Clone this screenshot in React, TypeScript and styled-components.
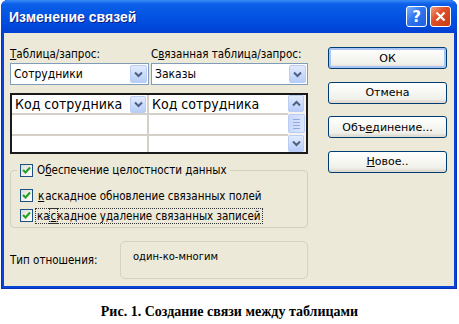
import styled, { createGlobalStyle } from 'styled-components';

const GlobalStyle = createGlobalStyle`
    body {
        margin: 0;
        background: #fff;
        font-family: "DejaVu Sans Condensed", "Liberation Sans", sans-serif;
    }
`;

const Page = styled.div`
    width: 459px;
    height: 324px;
    display: flex;
    flex-direction: column;
    align-items: flex-start;
`;

const Window = styled.div`
    width: 456px;
    height: 289px;
    margin-left: 1px;
    box-sizing: border-box;
    display: flex;
    flex-direction: column;
    border-radius: 7px 7px 0 0;
    background: #0a44d6;
    padding: 0 3px 3px 3px;
    box-shadow: inset 0 0 0 1px #0831b8;
`;

const TitleBar = styled.div`
    height: 33px;
    flex-shrink: 0;
    margin: 0 -3px;
    border-radius: 7px 7px 0 0;
    background: linear-gradient(#3b8cf7 0%, #0b5fe8 12%, #0455e3 45%, #0048dc 80%, #0340d2 100%);
    display: flex;
    align-items: center;
    padding: 0 6px 0 8px;
    gap: 3px;
`;

const Title = styled.div`
    flex: 1;
    color: #fff;
    font-family: "Liberation Sans", sans-serif;
    font-weight: bold;
    font-size: 14px;
    text-shadow: 1px 1px 0 #0a1e8a;
`;

const CaptionButton = styled.div<{ $close?: boolean }>`
    width: 21px;
    height: 21px;
    box-sizing: border-box;
    border: 1px solid #fff;
    border-radius: 3px;
    background: ${p => (p.$close
        ? 'linear-gradient(135deg, #f0a080 0%, #e0502a 40%, #c63a14 100%)'
        : 'linear-gradient(135deg, #7fb0ff 0%, #2f74f0 45%, #1d5fe0 100%)')};
    display: flex;
    align-items: center;
    justify-content: center;
    color: #fff;
    font-family: "DejaVu Sans", sans-serif;
    font-weight: bold;
    font-size: 15px;
`;

const Client = styled.div`
    flex: 1;
    background: #ece9d8;
    display: grid;
    grid-template-columns: 298px 119px;
    column-gap: 20px;
    padding: 0 0 0 6px;
    font-size: 11.5px;
    color: #000;
`;

const LeftColumn = styled.div`
    display: flex;
    flex-direction: column;
    padding-top: 11px;
`;

const LabelRow = styled.div`
    display: grid;
    grid-template-columns: 141px 1fr;
    height: 19px;
    align-items: center;
    white-space: nowrap;
`;

const ComboRow = styled.div`
    display: grid;
    grid-template-columns: 139px 1fr;
    column-gap: 2px;
`;

const Combo = styled.div`
    height: 22px;
    box-sizing: border-box;
    border: 1px solid #7f9db9;
    background: #fff;
    display: flex;
    align-items: center;
    padding: 0 1px 0 3px;
    font-size: 12px;
`;

const ComboText = styled.span`
    flex: 1;
    white-space: nowrap;
`;

const ArrowButton = styled.div<{ $small?: boolean }>`
    width: ${p => (p.$small ? '16px' : '17px')};
    height: ${p => (p.$small ? '17px' : '18px')};
    flex-shrink: 0;
    box-sizing: border-box;
    border: 1px solid #b9cdf5;
    border-radius: 2px;
    background: linear-gradient(#e2ebfe, #b7cdf7);
    display: flex;
    align-items: center;
    justify-content: center;
`;

const Grid = styled.div`
    margin-top: 8px;
    height: 61px;
    box-sizing: border-box;
    border: 2px solid #1a1a1a;
    background: #fff;
    display: grid;
    grid-template-columns: 1fr 18px;
`;

const Cells = styled.div`
    display: grid;
    grid-template-columns: 137px 1fr;
    grid-template-rows: 20px 21px 1fr;
`;

const Cell = styled.div<{ $right?: boolean; $last?: boolean }>`
    border-right: ${p => (p.$right ? 'none' : '2px solid #d4d0c8')};
    border-bottom: ${p => (p.$last ? 'none' : '2px solid #d4d0c8')};
    display: flex;
    align-items: center;
    padding: 0 1px 0 3px;
    font-size: 14px;
    white-space: nowrap;
`;

const ScrollBar = styled.div`
    display: flex;
    flex-direction: column;
    justify-content: space-between;
    padding: 0 1px 0 0;
    background: #f4f3ee;
`;

const Thumb = styled.div`
    flex: 1;
    margin: 2px 0;
    border: 1px solid #b9cdf5;
    border-radius: 2px;
    background: linear-gradient(90deg, #c9d8fb, #dbe6fd);
    display: flex;
    flex-direction: column;
    align-items: center;
    justify-content: center;
    gap: 2px;
`;

const Grip = styled.div`
    width: 7px;
    height: 1px;
    background: #8fa9e6;
`;

const GroupBox = styled.div`
    margin-top: 16px;
    height: 58px;
    box-sizing: border-box;
    border: 1px solid #d0d0bf;
    border-radius: 4px;
    position: relative;
    display: flex;
    flex-direction: column;
    padding: 16px 0 0 9px;
    gap: 3px;
`;

const Legend = styled.div`
    position: absolute;
    top: -10px;
    left: 6px;
    padding: 0 3px;
    background: #ece9d8;
    display: flex;
    align-items: center;
    gap: 4px;
    height: 18px;
`;

const CheckRow = styled.div<{ $focused?: boolean }>`
    display: flex;
    align-items: center;
    gap: 3px;
    height: 17px;

    span {
        outline: ${p => (p.$focused ? '1px dotted #333' : 'none')};
        padding: 0 1px;
    }
`;

const CheckBox = styled.div`
    width: 13px;
    height: 13px;
    box-sizing: border-box;
    border: 1px solid #1c5180;
    background: linear-gradient(135deg, #dcdcd7, #fff);
    display: flex;
    align-items: center;
    justify-content: center;
`;

const RelationRow = styled.div`
    margin-top: 13px;
    display: grid;
    grid-template-columns: 110px 1fr;
    align-items: center;
`;

const RelationBox = styled.div`
    height: 38px;
    box-sizing: border-box;
    border: 1px solid #d6d3c2;
    border-radius: 5px;
    padding: 9px 0 0 12px;
    font-family: "DejaVu Sans", sans-serif;
    font-size: 10px;
`;

const RightColumn = styled.div`
    display: flex;
    flex-direction: column;
    gap: 12.5px;
    padding-top: 14px;
`;

const Button = styled.div<{ $default?: boolean }>`
    height: 22px;
    box-sizing: border-box;
    border: 1px solid #003c74;
    border-radius: 3px;
    background: linear-gradient(#ffffff, #f0f0ea 80%, #d6d0c5);
    box-shadow: ${p => (p.$default ? 'inset 0 0 0 2px #a9c4f5' : 'inset 0 -1px 0 #e0dccf')};
    display: flex;
    align-items: center;
    justify-content: center;
    font-family: "DejaVu Sans", sans-serif;
    font-size: 11px;
`;

const Caption = styled.div`
    align-self: center;
    margin-top: 15px;
    font-family: "Liberation Serif", serif;
    font-weight: bold;
    font-size: 14px;
`;

const Chevron = ({ up }: { up?: boolean }) => (
    <svg width="9" height="7" viewBox="0 0 9 7">
        <path
            d={up ? 'M1 5.5 L4.5 2 L8 5.5' : 'M1 1.5 L4.5 5 L8 1.5'}
            fill="none"
            stroke="#4d6185"
            strokeWidth="2"
        />
    </svg>
);

const Check = () => (
    <svg width="9" height="9" viewBox="0 0 9 9">
        <path d="M1 4 L3.5 6.5 L8 1.5" fill="none" stroke="#21a121" strokeWidth="2" />
    </svg>
);

const U = styled.span`
    text-decoration: underline;
`;

const App = () => (
    <Page>
        <GlobalStyle />
        <Window>
            <TitleBar>
                <Title>Изменение связей</Title>
                <CaptionButton>?</CaptionButton>
                <CaptionButton $close>
                    <svg width="11" height="11" viewBox="0 0 11 11">
                        <path d="M1.5 1.5 L9.5 9.5 M9.5 1.5 L1.5 9.5" stroke="#fff" strokeWidth="2.2" />
                    </svg>
                </CaptionButton>
            </TitleBar>
            <Client>
                <LeftColumn>
                    <LabelRow>
                        <div><U>Т</U>аблица/запрос:</div>
                        <div>С<U>в</U>язанная таблица/запрос:</div>
                    </LabelRow>
                    <ComboRow>
                        <Combo>
                            <ComboText>Сотрудники</ComboText>
                            <ArrowButton><Chevron /></ArrowButton>
                        </Combo>
                        <Combo>
                            <ComboText>Заказы</ComboText>
                            <ArrowButton><Chevron /></ArrowButton>
                        </Combo>
                    </ComboRow>
                    <Grid>
                        <Cells>
                            <Cell>
                                <ComboText>Код сотрудника</ComboText>
                                <ArrowButton $small><Chevron /></ArrowButton>
                            </Cell>
                            <Cell $right>Код сотрудника</Cell>
                            <Cell />
                            <Cell $right />
                            <Cell $last />
                            <Cell $right $last />
                        </Cells>
                        <ScrollBar>
                            <ArrowButton $small><Chevron up /></ArrowButton>
                            <Thumb>
                                <Grip />
                                <Grip />
                                <Grip />
                                <Grip />
                            </Thumb>
                            <ArrowButton $small><Chevron /></ArrowButton>
                        </ScrollBar>
                    </Grid>
                    <GroupBox>
                        <Legend>
                            <CheckBox><Check /></CheckBox>
                            <span>О<U>б</U>еспечение целостности данных</span>
                        </Legend>
                        <CheckRow>
                            <CheckBox><Check /></CheckBox>
                            <span><U>к</U>аскадное обновление связанных полей</span>
                        </CheckRow>
                        <CheckRow $focused>
                            <CheckBox><Check /></CheckBox>
                            <span>ка<U>с</U>кадное удаление связанных записей</span>
                        </CheckRow>
                    </GroupBox>
                    <RelationRow>
                        <div>Тип отношения:</div>
                        <RelationBox>один-ко-многим</RelationBox>
                    </RelationRow>
                </LeftColumn>
                <RightColumn>
                    <Button $default>ОК</Button>
                    <Button>Отмена</Button>
                    <Button>Объ<U>е</U>динение...</Button>
                    <Button><U>Н</U>овое..</Button>
                </RightColumn>
            </Client>
        </Window>
        <Caption>Рис. 1. Создание связи между таблицами</Caption>
    </Page>
);

export default App;
